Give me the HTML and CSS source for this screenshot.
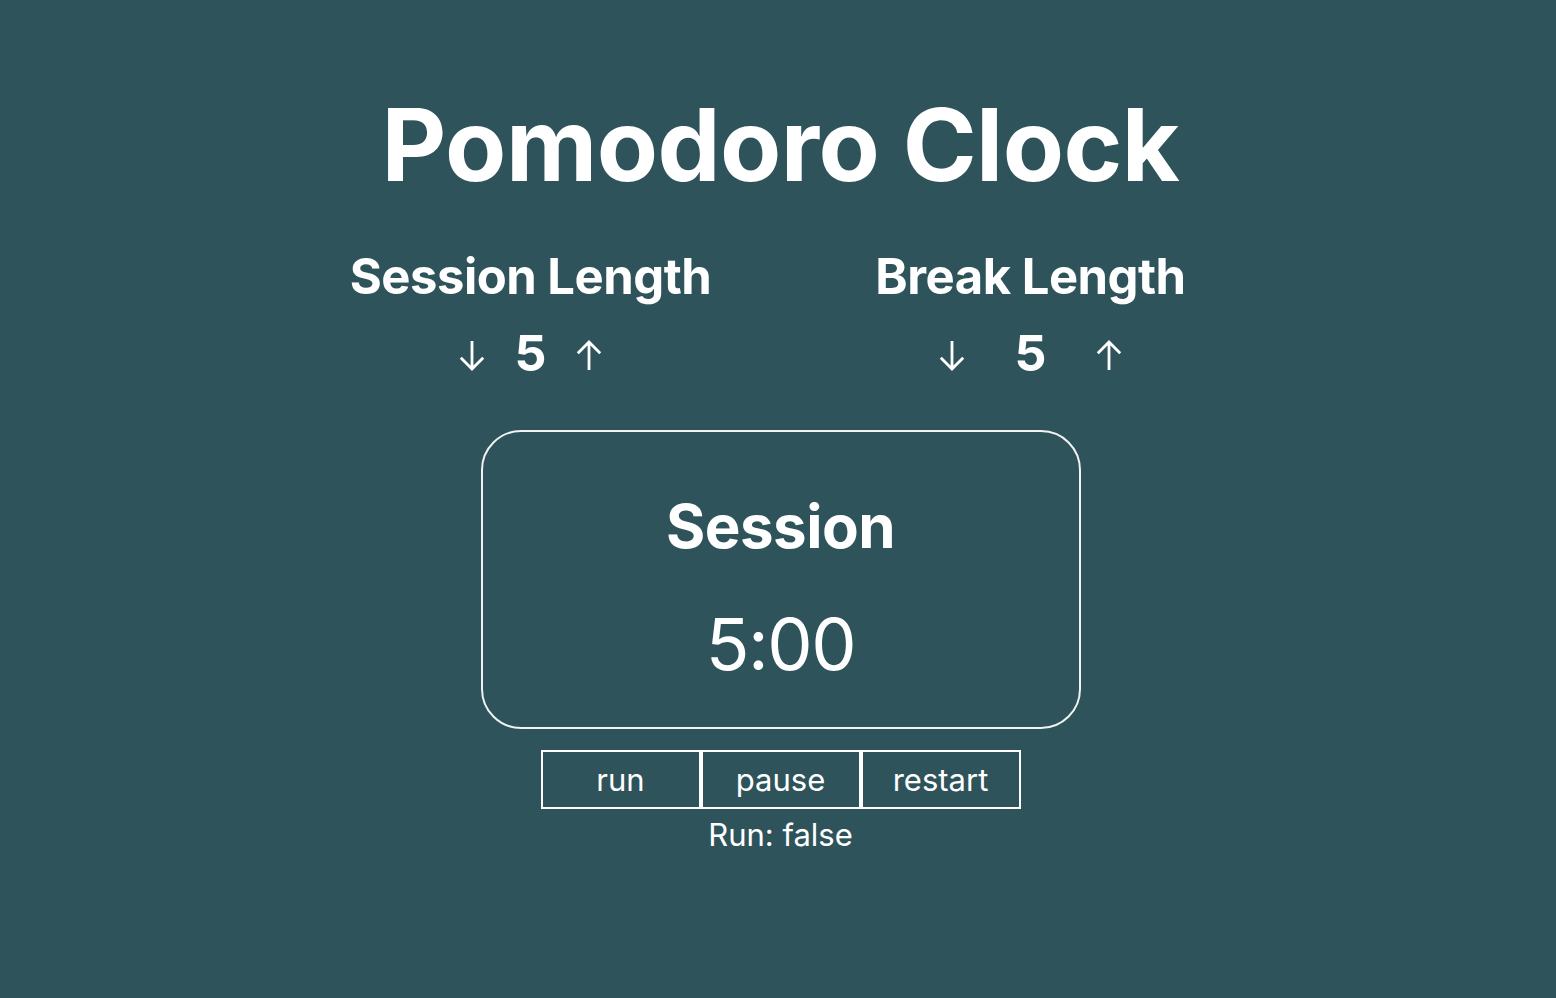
FILE: index.html
```html
<!DOCTYPE html>
<html>
<head>
<meta charset="utf-8">
<link rel="stylesheet" href="styles.css">
</head>
<body>
<main class="app">
  <h1 class="title">Pomodoro Clock</h1>
  <section class="settings">
    <div class="setting">
      <h2 class="setting-label">Session Length</h2>
      <div class="controls controls-session">
        <button class="arrow" aria-label="decrease"><svg viewBox="0 0 26 31" width="26" height="31"><path d="M13 1 V28.5 M1.8 17.8 L13 29 L24.2 17.8" fill="none" stroke="#fff" stroke-width="2.8" stroke-linecap="butt" stroke-linejoin="miter"/></svg></button>
        <span class="value">5</span>
        <button class="arrow" aria-label="increase"><svg viewBox="0 0 26 31" width="26" height="31"><path d="M13 30 V2.5 M1.8 13.2 L13 2 L24.2 13.2" fill="none" stroke="#fff" stroke-width="2.8" stroke-linecap="butt" stroke-linejoin="miter"/></svg></button>
      </div>
    </div>
    <div class="setting">
      <h2 class="setting-label">Break Length</h2>
      <div class="controls controls-break">
        <button class="arrow" aria-label="decrease"><svg viewBox="0 0 26 31" width="26" height="31"><path d="M13 1 V28.5 M1.8 17.8 L13 29 L24.2 17.8" fill="none" stroke="#fff" stroke-width="2.8" stroke-linecap="butt" stroke-linejoin="miter"/></svg></button>
        <span class="value">5</span>
        <button class="arrow" aria-label="increase"><svg viewBox="0 0 26 31" width="26" height="31"><path d="M13 30 V2.5 M1.8 13.2 L13 2 L24.2 13.2" fill="none" stroke="#fff" stroke-width="2.8" stroke-linecap="butt" stroke-linejoin="miter"/></svg></button>
      </div>
    </div>
  </section>
  <section class="timer">
    <h3 class="timer-label">Session</h3>
    <div class="timer-time">5:00</div>
  </section>
  <div class="buttons">
    <button class="btn">run</button>
    <button class="btn">pause</button>
    <button class="btn">restart</button>
  </div>
  <p class="status">Run: false</p>
</main>
</body>
</html>
```
FILE: styles.css
```css
html, body {
  margin: 0;
  padding: 0;
}
body {
  background: #2e535b;
  color: #ffffff;
  font-family: Inter, "Noto Sans", sans-serif;
  min-height: 998px;
}
.app {
  display: flex;
  flex-direction: column;
  align-items: center;
  padding-top: 85px;
  padding-left: 5px;
}
.title {
  margin: 0;
  font-size: 100px;
  font-weight: 700;
  line-height: 120px;
  letter-spacing: -0.5px;
}
.settings {
  display: grid;
  grid-template-columns: 500px 500px;
  margin-top: 42px;
}
.setting {
  display: flex;
  flex-direction: column;
  align-items: center;
}
.setting-label {
  margin: 0;
  font-size: 49px;
  font-weight: 700;
  line-height: 60px;
  letter-spacing: -0.5px;
}
.controls {
  display: flex;
  align-items: center;
  margin-top: 18px;
  height: 56px;
}
.controls-session { gap: 30px; }
.controls-break { gap: 50px; }
.arrow {
  display: flex;
  background: none;
  border: none;
  padding: 0;
  margin-top: 4px;
  cursor: pointer;
}
.value {
  font-size: 50px;
  font-weight: 700;
  line-height: 56px;
}
.timer {
  box-sizing: border-box;
  width: 600px;
  height: 299px;
  margin-top: 49px;
  padding-top: 59px;
  border: 2px solid #f2f2f2;
  border-radius: 40px;
  display: flex;
  flex-direction: column;
  align-items: center;
}
.timer-label {
  margin: 0;
  font-size: 60px;
  font-weight: 700;
  line-height: 70px;
  letter-spacing: -0.5px;
}
.timer-time {
  margin-top: 43px;
  font-size: 72px;
  font-weight: 400;
  line-height: 80px;
  letter-spacing: -1.5px;
}
.buttons {
  display: flex;
  margin-top: 21px;
}
.btn {
  box-sizing: border-box;
  width: 160px;
  height: 59px;
  background: transparent;
  border: 2px solid #ffffff;
  color: #ffffff;
  font-family: Inter, "Noto Sans", sans-serif;
  font-size: 31px;
  padding: 0;
  cursor: pointer;
}
.status {
  margin: 4px 0 0;
  font-size: 31px;
  line-height: 44px;
}
```
